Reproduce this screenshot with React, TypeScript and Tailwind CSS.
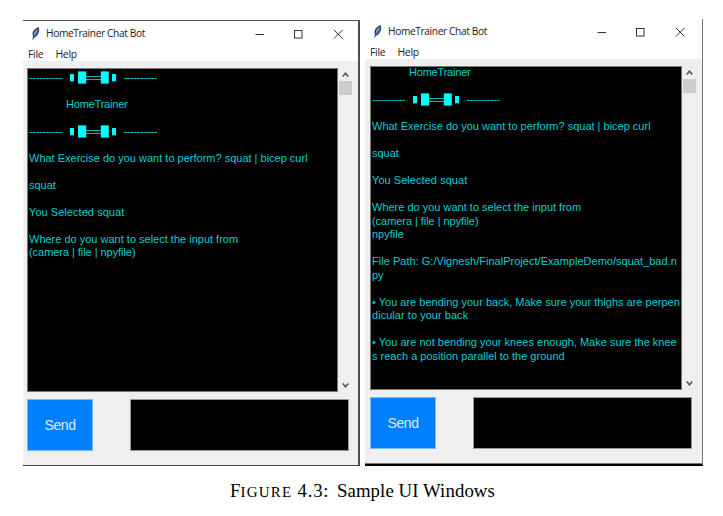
import React from 'react';

type Line = { text: string; tracking?: string; indent?: boolean };
type Entry = Line | 'blank' | 'dumbbell';

const leftLog: Entry[] = [
  'dumbbell',
  'blank',
  { text: 'HomeTrainer', tracking: 'tracking-[-0.2px]', indent: true },
  'blank',
  'dumbbell',
  'blank',
  { text: 'What Exercise do you want to perform? squat | bicep curl' },
  'blank',
  { text: 'squat' },
  'blank',
  { text: 'You Selected squat', tracking: 'tracking-[0.05px]' },
  'blank',
  { text: 'Where do you want to select the input from' },
  { text: '(camera | file | npyfile)', tracking: 'tracking-[-0.05px]' },
];

const rightLog: Entry[] = [
  { text: 'HomeTrainer', tracking: 'tracking-[-0.2px]', indent: true },
  'blank',
  'dumbbell',
  'blank',
  { text: 'What Exercise do you want to perform? squat | bicep curl' },
  'blank',
  { text: 'squat' },
  'blank',
  { text: 'You Selected squat', tracking: 'tracking-[0.05px]' },
  'blank',
  { text: 'Where do you want to select the input from' },
  { text: '(camera | file | npyfile)', tracking: 'tracking-[-0.05px]' },
  { text: 'npyfile' },
  'blank',
  { text: 'File Path: G:/Vignesh/FinalProject/ExampleDemo/squat_bad.n', tracking: 'tracking-[0.02px]' },
  { text: 'py' },
  'blank',
  { text: '• You are bending your back, Make sure your thighs are perpen' },
  { text: 'dicular to your back', tracking: 'tracking-[0.04px]' },
  'blank',
  { text: '• You are not bending your knees enough, Make sure the knee', tracking: 'tracking-[0.01px]' },
  { text: 's reach a position parallel to the ground' },
];

function Feather() {
  return (
    <svg width="10" height="14" viewBox="0 0 10 14">
      <path d="M7.8 0.3C4.6 1 1.6 3.6 1.5 7.4L2 9.6L1.2 13.4L3 10.8C6.6 9.6 9.2 5.4 7.8 0.3Z" fill="#2c3e57" />
      <path d="M7 1.4C4.4 2.8 2.5 5.4 2.7 9C4.5 7.2 6.2 4.8 7 1.4Z" fill="#7da6d0" />
      <path d="M7.5 3.5C6.7 6 5.2 8.2 3.7 9.6" stroke="#41709f" strokeWidth="1.1" fill="none" />
    </svg>
  );
}

function Dumbbell() {
  return (
    <div className="flex h-[13.5px] items-center">
      <span className="w-[40.5px] tracking-[-0.32px]">----------</span>
      <svg width="47" height="13" viewBox="0 0 47 13" className="mr-[7px] shrink-0">
        <g fill="#00ffff">
          <rect x="0" y="3" width="4" height="7.3" />
          <rect x="8" y="0.4" width="8.2" height="12.2" />
          <rect x="30.8" y="0.4" width="8" height="12.2" />
          <rect x="42" y="3" width="4" height="7.3" />
        </g>
        <path d="M16 5.5H31M16 8.5H31" stroke="#00b5b5" strokeWidth="1" />
      </svg>
      <span className="tracking-[-0.32px]">----------</span>
    </div>
  );
}

function Log({ entries }: { entries: Entry[] }) {
  return (
    <>
      {entries.map((e, i) => {
        if (e === 'blank') return <div key={i} className="h-[13.5px]" />;
        if (e === 'dumbbell') return <Dumbbell key={i} />;
        return (
          <div key={i} className={`h-[13.5px] ${e.indent ? 'pl-[37px]' : ''} ${e.tracking ?? ''}`}>
            {e.text}
          </div>
        );
      })}
    </>
  );
}

function TitleBar() {
  return (
    <div className="h-10 bg-white font-['Open_Sans','Noto_Sans',sans-serif] text-[#222]">
      <div className="flex h-[25px] items-center pl-2">
        <Feather />
        <span className="ml-[5px] w-[203px] text-[10.2px] tracking-[-0.38px]">HomeTrainer Chat Bot</span>
        <svg width="96" height="10" viewBox="0 0 96 10" className="shrink-0" fill="none" stroke="#333" strokeWidth="1">
          <path d="M6.5 5.5H15" />
          <rect x="45.5" y="1.5" width="7.5" height="7.5" />
          <path d="M85 1L93.5 9.5M93.5 1L85 9.5" />
        </svg>
      </div>
      <div className="flex h-[15px] items-center gap-[12px] pl-[5px] pt-px text-[10.4px] leading-[15px] tracking-[-0.25px]">
        <span>File</span>
        <span>Help</span>
      </div>
    </div>
  );
}

function ScrollBar() {
  return (
    <div className="flex w-[14px] flex-col items-center">
      <svg width="9" height="13" viewBox="0 0 9 13" fill="none" stroke="#555" strokeWidth="1.6">
        <path d="M1.7 8.5L4.5 5.2L7.3 8.5" />
      </svg>
      <div className="h-[14px] w-[13px] bg-[#cdcdcd]" />
      <div className="grow" />
      <svg width="9" height="13" viewBox="0 0 9 13" fill="none" stroke="#555" strokeWidth="1.6">
        <path d="M1.7 4.5L4.5 7.7L7.3 4.5" />
      </svg>
    </div>
  );
}

function Controls() {
  return (
    <div className="mt-[7px] flex h-[52px]">
      <div className="flex w-[66px] items-center justify-center border border-[#7ab8f5] bg-[#0080ff] font-['Liberation_Sans',Arial,sans-serif] text-[14px] tracking-[-0.4px] text-[#dcecff]">
        Send
      </div>
      <div className="ml-[37px] w-[219px] border border-[#999] bg-black" />
    </div>
  );
}

const screen =
  "h-[324px] overflow-hidden whitespace-pre border border-[#777] bg-black pl-px font-['Liberation_Sans',Arial,sans-serif] text-[11px] leading-[13.5px] text-[#00d0d0]";

export default function App() {
  return (
    <div className="h-[516px] w-[723px] overflow-hidden bg-white">
      <div className="flex items-start gap-[5px] pl-[23px] pt-[19px]">
        <div className="mt-px h-[446px] w-[337px] border-b border-r-2 border-t border-b-[#444] border-r-[#4a4a50] border-t-[#555] bg-[#efefef]">
          <TitleBar />
          <div className="pl-1 pt-[7px]">
            <div className="flex">
              <div className={`w-[311px] ${screen}`}>
                <div className="pt-[1.5px]">
                  <Log entries={leftLog} />
                </div>
              </div>
              <ScrollBar />
            </div>
            <Controls />
          </div>
        </div>
        <div className="h-[447px] w-[338px] border-b-2 border-r border-b-black border-r-[#777] bg-[#efefef]">
          <TitleBar />
          <div className="h-[405px] border-b border-[#777] pl-[5px] pt-[7px]">
            <div className="flex">
              <div className={`w-[312px] ${screen}`}>
                <div className="-mt-px">
                  <Log entries={rightLog} />
                </div>
              </div>
              <ScrollBar />
            </div>
            <Controls />
          </div>
        </div>
      </div>
      <div className="mt-[13px] flex items-baseline whitespace-pre pl-[230px] font-['Liberation_Serif','Times_New_Roman',serif] text-[18.8px] leading-6 text-black">
        <span>F</span>
        <span className="w-[57px] text-[15px] tracking-[1.2px]">IGURE</span>
        <span className="w-[39.5px] tracking-[0.8px]">4.3:</span>
        <span className="tracking-[0.09px]">Sample UI Windows</span>
      </div>
    </div>
  );
}
